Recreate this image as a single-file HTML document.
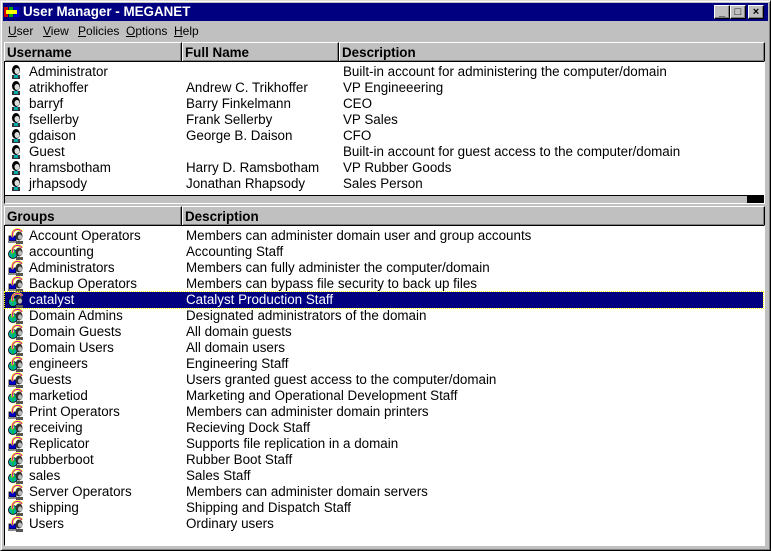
<!DOCTYPE html>
<html><head><style>
*{margin:0;padding:0;box-sizing:border-box}
body{width:771px;height:551px;background:#c0c0c0;font-family:"Liberation Sans",Arial,sans-serif;font-size:13.4px;position:relative;overflow:hidden;color:#000}
.a{position:absolute;white-space:nowrap}
.win{position:absolute;left:0;top:0;width:771px;height:551px;border:1px solid;border-color:#dfdfdf #000 #000 #dfdfdf;box-shadow:inset 1px 1px #fff,inset -1px -1px #808080}
.title{position:absolute;left:3px;top:3px;width:765px;height:18px;background:#000080;color:#fff;font-weight:bold;font-size:13.4px;line-height:18px;padding-left:20px}
.btn{position:absolute;top:5px;width:16px;height:14px;background:#c0c0c0;border:1px solid;border-color:#fff #000 #000 #fff;box-shadow:inset -1px -1px #808080;font-size:11px;line-height:12px;text-align:center;color:#000;font-weight:bold}
.menu span{position:absolute;top:24px;font-size:12px}
.pane{position:absolute;left:4px;background:#fff;border:1px solid;border-color:#808080 #fff #fff #808080;box-shadow:inset 1px 1px #000}
.hdr{position:absolute;height:20px;background:#c0c0c0;border:1px solid;border-color:#fff #000 #000 #fff;box-shadow:inset -1px -1px #808080;font-weight:bold;line-height:19px;padding-left:2px}
.row{position:absolute;left:0;height:16px;line-height:16px;width:758px}
.row span{position:absolute}
.ic{position:absolute;left:3px;top:0;width:16px;height:16px}
.sel{background:#000080;color:#fff;outline:1px dotted #ff0}
</style></head><body>
<div class="win"></div>
<div class="title">User Manager - MEGANET</div>
<svg class="a" style="left:4px;top:6px" width="16" height="13"><rect x="0" y="1" width="4" height="10" fill="#c00"/><rect x="5" y="1" width="4" height="10" fill="#0a0"/><rect x="10" y="1" width="5" height="10" fill="#00c"/><rect x="2" y="4" width="11" height="4" fill="#ff0"/></svg>
<div class="btn" style="left:714px">_</div>
<div class="btn" style="left:730px">□</div>
<div class="btn" style="left:748px">×</div>
<div class="menu">
<span style="left:8px"><u>U</u>ser</span>
<span style="left:43px"><u>V</u>iew</span>
<span style="left:78px"><u>P</u>olicies</span>
<span style="left:126px"><u>O</u>ptions</span>
<span style="left:174px"><u>H</u>elp</span>
</div>
<div class="hdr" style="left:4px;top:42px;width:178px">Username</div>
<div class="hdr" style="left:182px;top:42px;width:157px">Full Name</div>
<div class="hdr" style="left:339px;top:42px;width:426px">Description</div>
<div class="pane" style="top:61px;width:761px;height:143px;border-top:1px solid #000;box-shadow:none;border-left-color:#000">
<div style="position:absolute;left:0;right:0;bottom:0;height:8px;background:#c0c0c0;border-top:1px solid #000"></div>
<div style="position:absolute;right:0;bottom:0;width:17px;height:8px;background:#000"></div>
</div>
<div id="u"></div>
<div class="hdr" style="left:4px;top:206px;width:178px">Groups</div>
<div class="hdr" style="left:182px;top:206px;width:583px">Description</div>
<div class="pane" style="top:225px;width:761px;height:321px;border-top:1px solid #000;box-shadow:none;border-left-color:#000"></div>
<div id="g"></div>
<script>
var U=[["Administrator","","Built-in account for administering the computer/domain"],["atrikhoffer","Andrew C. Trikhoffer","VP Engineeering"],["barryf","Barry Finkelmann","CEO"],["fsellerby","Frank Sellerby","VP Sales"],["gdaison","George B. Daison","CFO"],["Guest","","Built-in account for guest access to the computer/domain"],["hramsbotham","Harry D. Ramsbotham","VP Rubber Goods"],["jrhapsody","Jonathan Rhapsody","Sales Person"]];
var ui='<svg class="ic" viewBox="0 0 16 16"><ellipse cx="8" cy="6" rx="4" ry="5" fill="#000"/><ellipse cx="9" cy="7" rx="2.5" ry="3" fill="#ddd"/><rect x="4" y="11" width="8" height="4" fill="#333"/><rect x="6" y="11" width="4" height="3" fill="#0aa"/></svg>';
var h='';U.forEach(function(r,i){h+='<div class="row" style="left:5px;top:'+(64+i*16)+'px">'+ui+'<span style="left:24px">'+r[0]+'</span><span style="left:181px">'+r[1]+'</span><span style="left:338px">'+r[2]+'</span></div>'});
document.getElementById('u').innerHTML=h;
var G=[["Account Operators","Members can administer domain user and group accounts",1],["accounting","Accounting Staff",0],["Administrators","Members can fully administer the computer/domain",1],["Backup Operators","Members can bypass file security to back up files",1],["catalyst","Catalyst Production Staff",0],["Domain Admins","Designated administrators of the domain",0],["Domain Guests","All domain guests",0],["Domain Users","All domain users",0],["engineers","Engineering Staff",0],["Guests","Users granted guest access to the computer/domain",1],["marketiod","Marketing and Operational Development Staff",0],["Print Operators","Members can administer domain printers",1],["receiving","Recieving Dock Staff",0],["Replicator","Supports file replication in a domain",1],["rubberboot","Rubber Boot Staff",0],["sales","Sales Staff",0],["Server Operators","Members can administer domain servers",1],["shipping","Shipping and Dispatch Staff",0],["Users","Ordinary users",1]];
function gi(l){return '<svg class="ic" viewBox="0 0 16 16">'+(l?'<rect x="1" y="8" width="7" height="5" fill="#00c" stroke="#000" stroke-width=".8"/><rect x="0" y="13" width="9" height="2" fill="#888"/>':'<circle cx="5" cy="10" r="4.5" fill="#0aa" stroke="#000" stroke-width=".8"/><path d="M2 9h6M5 6v8" stroke="#0c0"/>')+'<path d="M5 9a5 5 0 0 1 9-5" stroke="#ff0" stroke-width="2.5" fill="none"/><path d="M5 9a5 5 0 0 1 9-5" stroke="#c0c" stroke-width="1" fill="none"/><ellipse cx="11" cy="8" rx="3.5" ry="4.5" fill="#333"/><ellipse cx="12" cy="9" rx="2" ry="2.5" fill="#bbb"/><rect x="8" y="13" width="7" height="3" fill="#555"/></svg>'}
h='';G.forEach(function(r,i){h+='<div class="row'+(i==4?' sel':'')+'" style="left:5px;top:'+(228+i*16)+'px">'+gi(r[2])+'<span style="left:24px">'+r[0]+'</span><span style="left:181px">'+r[1]+'</span></div>'});
document.getElementById('g').innerHTML=h;
</script>
</body></html>
